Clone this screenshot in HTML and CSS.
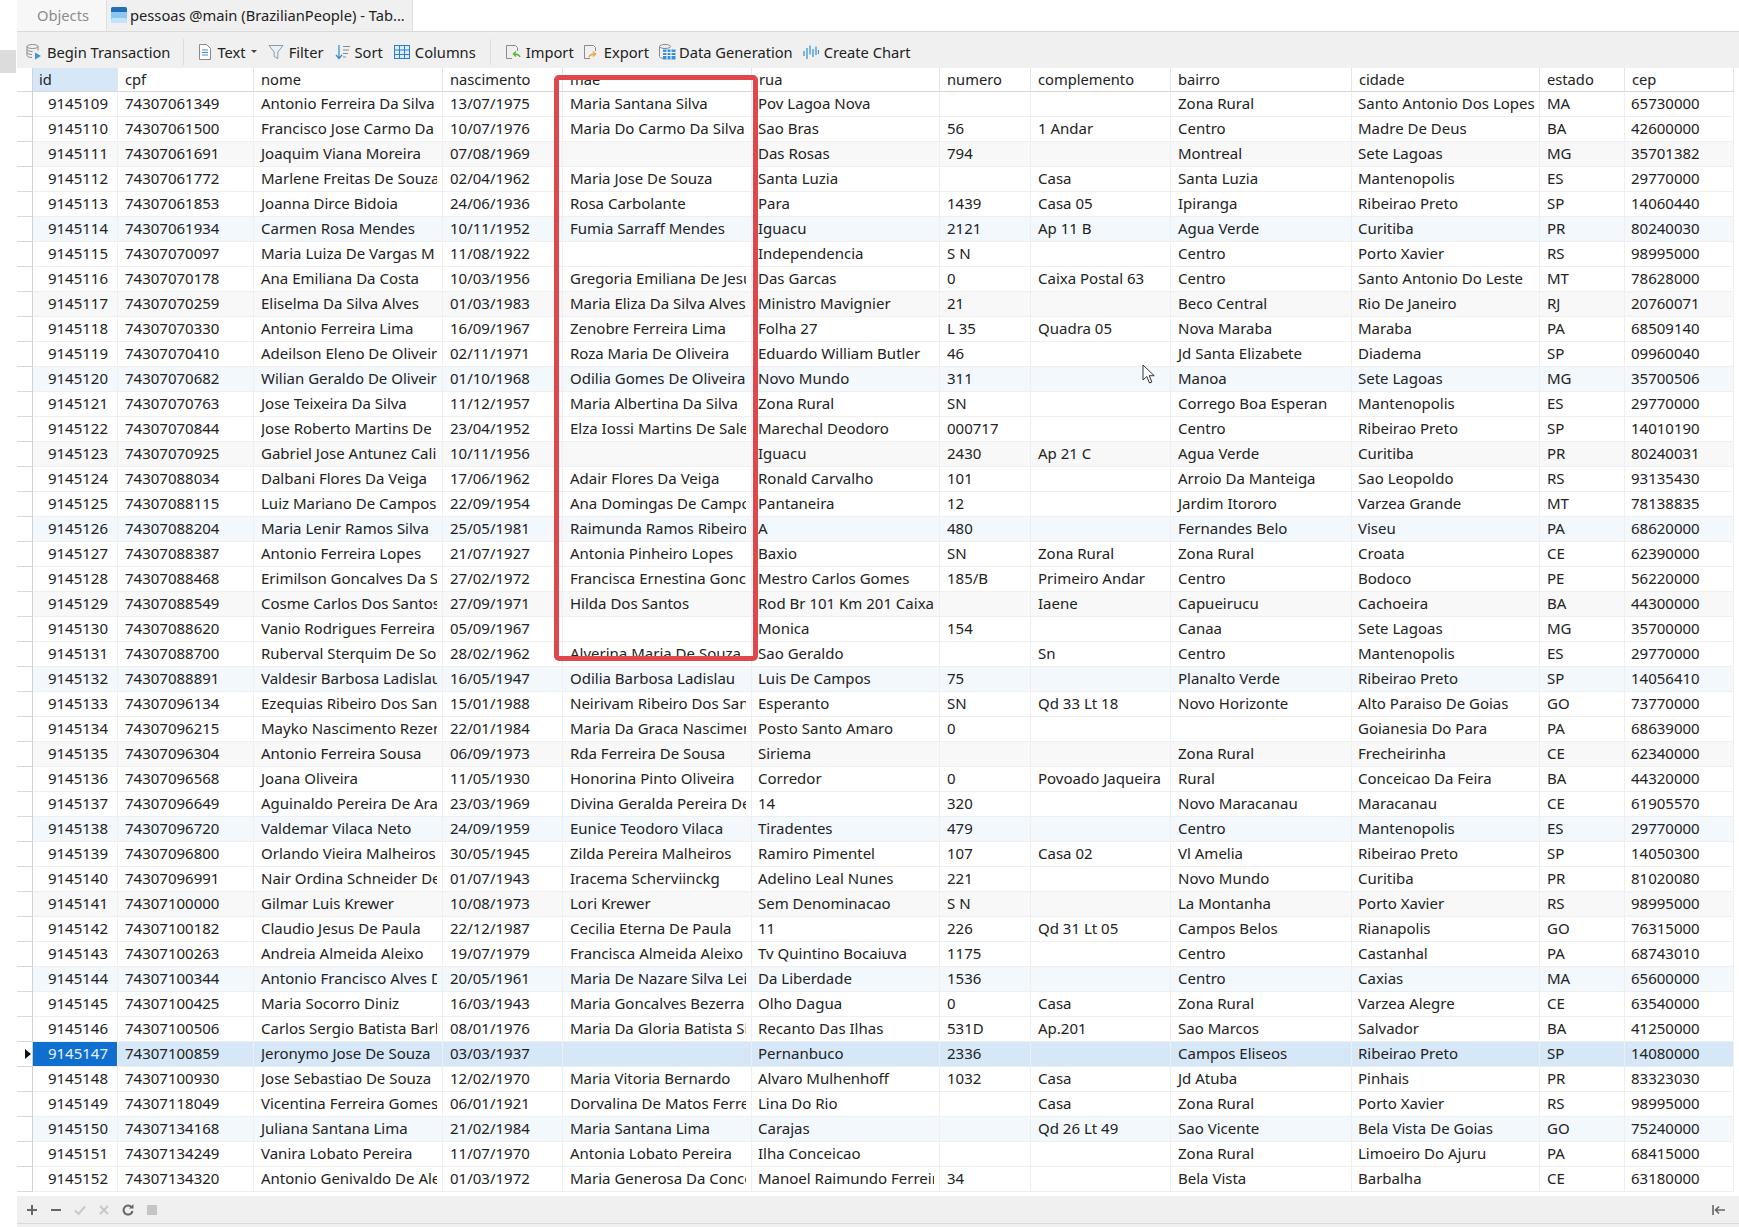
FILE: index.html
```html
<!DOCTYPE html>
<html lang="en">
<head>
    <meta charset="UTF-8">
    <title>pessoas @main (BrazilianPeople) - Table</title>
    <link rel="stylesheet" href="styles.css">
</head>
<body>
<div class="app">
    <div class="gutter"><div class="gutter-mark"></div></div>
    <div class="main">
        <div class="tabs">
            <div class="tab tab-objects">Objects</div>
            <div class="tab tab-active">
                <svg class="tab-icon" width="16" height="16" viewBox="0 0 16 16"><rect x="0" y="0" width="16" height="16" rx="2" fill="#8cc6f2"/><path d="M0 2a2 2 0 0 1 2-2h12a2 2 0 0 1 2 2v3H0z" fill="#1c6fb8"/><rect x="0" y="11" width="16" height="5" rx="2" fill="#c4e2f8"/></svg>
                <span>pessoas @main (BrazilianPeople) - Tab...</span>
            </div>
        </div>
        <div class="toolbar">
            <div class="tool tool-begin">
                <svg width="16" height="16" viewBox="0 0 16 16" fill="none" stroke="#8a8a8a"><ellipse cx="6.5" cy="2.5" rx="5.5" ry="2"/><path d="M1 2.5v9c0 1.1 2.5 2 5 2M12 2.5v4M1 5.5c0 1.1 2.5 2 5.5 2M1 8.5c0 1.1 2.5 2 5 2"/><path d="M9 8.5l6 3.500-6 3.500z" fill="#3d96d8" stroke="none"/></svg>
                <span>Begin Transaction</span>
            </div>
            <div class="sep"></div>
            <div class="tool">
                <svg width="14" height="16" viewBox="0 0 14 16" fill="none"><path d="M1.500.5h7l4 4v11h-11z" fill="#fff" stroke="#8a8a8a"/><path d="M4 6h6M4 8.500h6M4 11h6" stroke="#3f8fcf"/></svg>
                <span>Text</span>
                <svg width="6" height="3" viewBox="0 0 6 3"><path d="M0 0h6L3 3z" fill="#444"/></svg>
            </div>
            <div class="tool">
                <svg width="16" height="16" viewBox="0 0 16 16" fill="none" stroke="#7f9db5"><path d="M1 1.500h14L9.800 8v6.500l-3.600-2V8z"/></svg>
                <span>Filter</span>
            </div>
            <div class="tool">
                <svg width="15" height="16" viewBox="0 0 15 16" fill="none"><path d="M4 1v13M1 11l3 3.500L7 11" stroke="#2f8ad6" stroke-width="1.200"/><path d="M8 2.500h7M8 6h6M8 9.500h5M8 13h3" stroke="#8a8a8a"/></svg>
                <span>Sort</span>
            </div>
            <div class="tool tool-columns">
                <svg width="16" height="16" viewBox="0 0 16 16" fill="none" stroke="#2f7fc4"><rect x=".5" y="1.500" width="15" height="13" fill="#dcecf9"/><path d="M5.500 1.500v13M10.500 1.500v13M.5 6h15M.5 10.500h15"/></svg>
                <span>Columns</span>
            </div>
            <div class="sep"></div>
            <div class="tool tool-import">
                <svg width="16" height="16" viewBox="0 0 16 16" fill="none"><path d="M7 14.500H1.500v-13h9l2 2V7" stroke="#8a8a8a"/><path d="M15 13c-1-2.500-3-3-6-3M11 7.500L8.500 10l2.500 2.500" stroke="#5cb531" stroke-width="1.400"/></svg>
                <span>Import</span>
            </div>
            <div class="tool tool-export">
                <svg width="16" height="16" viewBox="0 0 16 16" fill="none"><path d="M7 14.500H1.500v-13h9l2 2V7" stroke="#8a8a8a"/><path d="M6 13c1-2.500 3-3 6-3M10 7.500l2.500 2.500-2.500 2.500" stroke="#eba63c" stroke-width="1.400"/></svg>
                <span>Export</span>
            </div>
            <div class="tool tool-data">
                <svg width="17" height="16" viewBox="0 0 17 16" fill="none"><ellipse cx="6" cy="2.500" rx="5.500" ry="2" stroke="#8a8a8a"/><path d="M.5 2.500v10c0 1 2 1.800 4 2" stroke="#8a8a8a"/><rect x="4" y="5.500" width="12.500" height="10" fill="#3a8fd6"/><path d="M4 8.500h12.500M4 11.500h12.500M8 5.500v10M12 5.500v10" stroke="#fff"/></svg>
                <span>Data Generation</span>
            </div>
            <div class="tool">
                <svg width="16" height="16" viewBox="0 0 16 16" fill="none" stroke="#3d96d8" stroke-width="1.300"><path d="M1 7v5M4 4v11M7 1.500v9M10 5v8M13 2.500V11M15.500 6v4"/></svg>
                <span>Create Chart</span>
            </div>
        </div>
        <div class="grid-wrap">
            <table class="grid">
                <colgroup>
                    <col class="c-head"><col class="c-id"><col class="c-cpf"><col class="c-nome"><col class="c-nasc"><col class="c-mae"><col class="c-rua"><col class="c-num"><col class="c-comp"><col class="c-bairro"><col class="c-cidade"><col class="c-estado"><col class="c-cep">
                </colgroup>
                <thead>
                    <tr><th class="rowhead"></th><th class="sorted">id</th><th>cpf</th><th>nome</th><th>nascimento</th><th>mae</th><th>rua</th><th>numero</th><th>complemento</th><th>bairro</th><th>cidade</th><th>estado</th><th>cep</th></tr>
                </thead>
                <tbody>
                    <tr><td class="rowhead"></td><td class="id">9145109</td><td>74307061349</td><td><span class="cut">Antonio Ferreira Da Silva</span></td><td>13/07/1975</td><td>Maria Santana Silva</td><td>Pov Lagoa Nova</td><td></td><td></td><td>Zona Rural</td><td>Santo Antonio Dos Lopes</td><td>MA</td><td>65730000</td></tr>
                    <tr><td class="rowhead"></td><td class="id">9145110</td><td>74307061500</td><td><span class="cut">Francisco Jose Carmo Da</span></td><td>10/07/1976</td><td><span class="cut">Maria Do Carmo Da Silva</span></td><td>Sao Bras</td><td>56</td><td>1 Andar</td><td>Centro</td><td>Madre De Deus</td><td>BA</td><td>42600000</td></tr>
                    <tr><td class="rowhead"></td><td class="id">9145111</td><td>74307061691</td><td>Joaquim Viana Moreira</td><td>07/08/1969</td><td></td><td>Das Rosas</td><td>794</td><td></td><td>Montreal</td><td>Sete Lagoas</td><td>MG</td><td>35701382</td></tr>
                    <tr><td class="rowhead"></td><td class="id">9145112</td><td>74307061772</td><td><span class="cut">Marlene Freitas De Souza</span></td><td>02/04/1962</td><td>Maria Jose De Souza</td><td>Santa Luzia</td><td></td><td>Casa</td><td>Santa Luzia</td><td>Mantenopolis</td><td>ES</td><td>29770000</td></tr>
                    <tr><td class="rowhead"></td><td class="id">9145113</td><td>74307061853</td><td>Joanna Dirce Bidoia</td><td>24/06/1936</td><td>Rosa Carbolante</td><td>Para</td><td>1439</td><td>Casa 05</td><td>Ipiranga</td><td>Ribeirao Preto</td><td>SP</td><td>14060440</td></tr>
                    <tr><td class="rowhead"></td><td class="id">9145114</td><td>74307061934</td><td>Carmen Rosa Mendes</td><td>10/11/1952</td><td>Fumia Sarraff Mendes</td><td>Iguacu</td><td>2121</td><td>Ap 11 B</td><td>Agua Verde</td><td>Curitiba</td><td>PR</td><td>80240030</td></tr>
                    <tr><td class="rowhead"></td><td class="id">9145115</td><td>74307070097</td><td>Maria Luiza De Vargas M</td><td>11/08/1922</td><td></td><td>Independencia</td><td>S N</td><td></td><td>Centro</td><td>Porto Xavier</td><td>RS</td><td>98995000</td></tr>
                    <tr><td class="rowhead"></td><td class="id">9145116</td><td>74307070178</td><td>Ana Emiliana Da Costa</td><td>10/03/1956</td><td><span class="cut">Gregoria Emiliana De Jesus</span></td><td>Das Garcas</td><td>0</td><td>Caixa Postal 63</td><td>Centro</td><td>Santo Antonio Do Leste</td><td>MT</td><td>78628000</td></tr>
                    <tr><td class="rowhead"></td><td class="id">9145117</td><td>74307070259</td><td>Eliselma Da Silva Alves</td><td>01/03/1983</td><td><span class="cut">Maria Eliza Da Silva Alves</span></td><td>Ministro Mavignier</td><td>21</td><td></td><td>Beco Central</td><td>Rio De Janeiro</td><td>RJ</td><td>20760071</td></tr>
                    <tr><td class="rowhead"></td><td class="id">9145118</td><td>74307070330</td><td>Antonio Ferreira Lima</td><td>16/09/1967</td><td>Zenobre Ferreira Lima</td><td>Folha 27</td><td>L 35</td><td>Quadra 05</td><td>Nova Maraba</td><td>Maraba</td><td>PA</td><td>68509140</td></tr>
                    <tr><td class="rowhead"></td><td class="id">9145119</td><td>74307070410</td><td><span class="cut">Adeilson Eleno De Oliveira</span></td><td>02/11/1971</td><td>Roza Maria De Oliveira</td><td><span class="cut">Eduardo William Butler</span></td><td>46</td><td></td><td>Jd Santa Elizabete</td><td>Diadema</td><td>SP</td><td>09960040</td></tr>
                    <tr><td class="rowhead"></td><td class="id">9145120</td><td>74307070682</td><td><span class="cut">Wilian Geraldo De Oliveira</span></td><td>01/10/1968</td><td><span class="cut">Odilia Gomes De Oliveira</span></td><td>Novo Mundo</td><td>311</td><td></td><td>Manoa</td><td>Sete Lagoas</td><td>MG</td><td>35700506</td></tr>
                    <tr><td class="rowhead"></td><td class="id">9145121</td><td>74307070763</td><td>Jose Teixeira Da Silva</td><td>11/12/1957</td><td><span class="cut">Maria Albertina Da Silva</span></td><td>Zona Rural</td><td>SN</td><td></td><td>Corrego Boa Esperan</td><td>Mantenopolis</td><td>ES</td><td>29770000</td></tr>
                    <tr><td class="rowhead"></td><td class="id">9145122</td><td>74307070844</td><td><span class="cut">Jose Roberto Martins De</span></td><td>23/04/1952</td><td><span class="cut">Elza Iossi Martins De Sale</span></td><td>Marechal Deodoro</td><td>000717</td><td></td><td>Centro</td><td>Ribeirao Preto</td><td>SP</td><td>14010190</td></tr>
                    <tr><td class="rowhead"></td><td class="id">9145123</td><td>74307070925</td><td><span class="cut">Gabriel Jose Antunez Cali</span></td><td>10/11/1956</td><td></td><td>Iguacu</td><td>2430</td><td>Ap 21 C</td><td>Agua Verde</td><td>Curitiba</td><td>PR</td><td>80240031</td></tr>
                    <tr><td class="rowhead"></td><td class="id">9145124</td><td>74307088034</td><td>Dalbani Flores Da Veiga</td><td>17/06/1962</td><td>Adair Flores Da Veiga</td><td>Ronald Carvalho</td><td>101</td><td></td><td>Arroio Da Manteiga</td><td>Sao Leopoldo</td><td>RS</td><td>93135430</td></tr>
                    <tr><td class="rowhead"></td><td class="id">9145125</td><td>74307088115</td><td><span class="cut">Luiz Mariano De Campos</span></td><td>22/09/1954</td><td><span class="cut">Ana Domingas De Campos</span></td><td>Pantaneira</td><td>12</td><td></td><td>Jardim Itororo</td><td>Varzea Grande</td><td>MT</td><td>78138835</td></tr>
                    <tr><td class="rowhead"></td><td class="id">9145126</td><td>74307088204</td><td><span class="cut">Maria Lenir Ramos Silva</span></td><td>25/05/1981</td><td><span class="cut">Raimunda Ramos Ribeiro</span></td><td>A</td><td>480</td><td></td><td>Fernandes Belo</td><td>Viseu</td><td>PA</td><td>68620000</td></tr>
                    <tr><td class="rowhead"></td><td class="id">9145127</td><td>74307088387</td><td>Antonio Ferreira Lopes</td><td>21/07/1927</td><td>Antonia Pinheiro Lopes</td><td>Baxio</td><td>SN</td><td>Zona Rural</td><td>Zona Rural</td><td>Croata</td><td>CE</td><td>62390000</td></tr>
                    <tr><td class="rowhead"></td><td class="id">9145128</td><td>74307088468</td><td><span class="cut">Erimilson Goncalves Da Silva</span></td><td>27/02/1972</td><td><span class="cut">Francisca Ernestina Goncalves</span></td><td>Mestro Carlos Gomes</td><td>185/B</td><td>Primeiro Andar</td><td>Centro</td><td>Bodoco</td><td>PE</td><td>56220000</td></tr>
                    <tr><td class="rowhead"></td><td class="id">9145129</td><td>74307088549</td><td><span class="cut">Cosme Carlos Dos Santos</span></td><td>27/09/1971</td><td>Hilda Dos Santos</td><td><span class="cut">Rod Br 101 Km 201 Caixa Postal</span></td><td></td><td>Iaene</td><td>Capueirucu</td><td>Cachoeira</td><td>BA</td><td>44300000</td></tr>
                    <tr><td class="rowhead"></td><td class="id">9145130</td><td>74307088620</td><td><span class="cut">Vanio Rodrigues Ferreira</span></td><td>05/09/1967</td><td></td><td>Monica</td><td>154</td><td></td><td>Canaa</td><td>Sete Lagoas</td><td>MG</td><td>35700000</td></tr>
                    <tr><td class="rowhead"></td><td class="id">9145131</td><td>74307088700</td><td><span class="cut">Ruberval Sterquim De Souza</span></td><td>28/02/1962</td><td><span class="cut">Alverina Maria De Souza</span></td><td>Sao Geraldo</td><td></td><td>Sn</td><td>Centro</td><td>Mantenopolis</td><td>ES</td><td>29770000</td></tr>
                    <tr><td class="rowhead"></td><td class="id">9145132</td><td>74307088891</td><td><span class="cut">Valdesir Barbosa Ladislau</span></td><td>16/05/1947</td><td>Odilia Barbosa Ladislau</td><td>Luis De Campos</td><td>75</td><td></td><td>Planalto Verde</td><td>Ribeirao Preto</td><td>SP</td><td>14056410</td></tr>
                    <tr><td class="rowhead"></td><td class="id">9145133</td><td>74307096134</td><td><span class="cut">Ezequias Ribeiro Dos Santos</span></td><td>15/01/1988</td><td><span class="cut">Neirivam Ribeiro Dos Santos</span></td><td>Esperanto</td><td>SN</td><td>Qd 33 Lt 18</td><td>Novo Horizonte</td><td>Alto Paraiso De Goias</td><td>GO</td><td>73770000</td></tr>
                    <tr><td class="rowhead"></td><td class="id">9145134</td><td>74307096215</td><td><span class="cut">Mayko Nascimento Rezende</span></td><td>22/01/1984</td><td><span class="cut">Maria Da Graca Nascimento</span></td><td>Posto Santo Amaro</td><td>0</td><td></td><td></td><td>Goianesia Do Para</td><td>PA</td><td>68639000</td></tr>
                    <tr><td class="rowhead"></td><td class="id">9145135</td><td>74307096304</td><td>Antonio Ferreira Sousa</td><td>06/09/1973</td><td>Rda Ferreira De Sousa</td><td>Siriema</td><td></td><td></td><td>Zona Rural</td><td>Frecheirinha</td><td>CE</td><td>62340000</td></tr>
                    <tr><td class="rowhead"></td><td class="id">9145136</td><td>74307096568</td><td>Joana Oliveira</td><td>11/05/1930</td><td>Honorina Pinto Oliveira</td><td>Corredor</td><td>0</td><td><span class="cut">Povoado Jaqueira</span></td><td>Rural</td><td>Conceicao Da Feira</td><td>BA</td><td>44320000</td></tr>
                    <tr><td class="rowhead"></td><td class="id">9145137</td><td>74307096649</td><td><span class="cut">Aguinaldo Pereira De Araujo</span></td><td>23/03/1969</td><td><span class="cut">Divina Geralda Pereira De Araujo</span></td><td>14</td><td>320</td><td></td><td>Novo Maracanau</td><td>Maracanau</td><td>CE</td><td>61905570</td></tr>
                    <tr><td class="rowhead"></td><td class="id">9145138</td><td>74307096720</td><td>Valdemar Vilaca Neto</td><td>24/09/1959</td><td>Eunice Teodoro Vilaca</td><td>Tiradentes</td><td>479</td><td></td><td>Centro</td><td>Mantenopolis</td><td>ES</td><td>29770000</td></tr>
                    <tr><td class="rowhead"></td><td class="id">9145139</td><td>74307096800</td><td><span class="cut">Orlando Vieira Malheiros</span></td><td>30/05/1945</td><td>Zilda Pereira Malheiros</td><td>Ramiro Pimentel</td><td>107</td><td>Casa 02</td><td>Vl Amelia</td><td>Ribeirao Preto</td><td>SP</td><td>14050300</td></tr>
                    <tr><td class="rowhead"></td><td class="id">9145140</td><td>74307096991</td><td><span class="cut">Nair Ordina Schneider De Souza</span></td><td>01/07/1943</td><td>Iracema Scherviinckg</td><td>Adelino Leal Nunes</td><td>221</td><td></td><td>Novo Mundo</td><td>Curitiba</td><td>PR</td><td>81020080</td></tr>
                    <tr><td class="rowhead"></td><td class="id">9145141</td><td>74307100000</td><td>Gilmar Luis Krewer</td><td>10/08/1973</td><td>Lori Krewer</td><td>Sem Denominacao</td><td>S N</td><td></td><td>La Montanha</td><td>Porto Xavier</td><td>RS</td><td>98995000</td></tr>
                    <tr><td class="rowhead"></td><td class="id">9145142</td><td>74307100182</td><td>Claudio Jesus De Paula</td><td>22/12/1987</td><td>Cecilia Eterna De Paula</td><td>11</td><td>226</td><td>Qd 31 Lt 05</td><td>Campos Belos</td><td>Rianapolis</td><td>GO</td><td>76315000</td></tr>
                    <tr><td class="rowhead"></td><td class="id">9145143</td><td>74307100263</td><td>Andreia Almeida Aleixo</td><td>19/07/1979</td><td><span class="cut">Francisca Almeida Aleixo</span></td><td>Tv Quintino Bocaiuva</td><td>1175</td><td></td><td>Centro</td><td>Castanhal</td><td>PA</td><td>68743010</td></tr>
                    <tr><td class="rowhead"></td><td class="id">9145144</td><td>74307100344</td><td><span class="cut">Antonio Francisco Alves Dias</span></td><td>20/05/1961</td><td><span class="cut">Maria De Nazare Silva Leite</span></td><td>Da Liberdade</td><td>1536</td><td></td><td>Centro</td><td>Caxias</td><td>MA</td><td>65600000</td></tr>
                    <tr><td class="rowhead"></td><td class="id">9145145</td><td>74307100425</td><td>Maria Socorro Diniz</td><td>16/03/1943</td><td>Maria Goncalves Bezerra</td><td>Olho Dagua</td><td>0</td><td>Casa</td><td>Zona Rural</td><td>Varzea Alegre</td><td>CE</td><td>63540000</td></tr>
                    <tr><td class="rowhead"></td><td class="id">9145146</td><td>74307100506</td><td><span class="cut">Carlos Sergio Batista Barbosa</span></td><td>08/01/1976</td><td><span class="cut">Maria Da Gloria Batista Silva</span></td><td>Recanto Das Ilhas</td><td>531D</td><td>Ap.201</td><td>Sao Marcos</td><td>Salvador</td><td>BA</td><td>41250000</td></tr>
                    <tr class="selected"><td class="rowhead"><span class="pointer"></span></td><td class="id">9145147</td><td>74307100859</td><td><span class="cut">Jeronymo Jose De Souza</span></td><td>03/03/1937</td><td></td><td>Pernanbuco</td><td>2336</td><td></td><td>Campos Eliseos</td><td>Ribeirao Preto</td><td>SP</td><td>14080000</td></tr>
                    <tr><td class="rowhead"></td><td class="id">9145148</td><td>74307100930</td><td><span class="cut">Jose Sebastiao De Souza</span></td><td>12/02/1970</td><td>Maria Vitoria Bernardo</td><td>Alvaro Mulhenhoff</td><td>1032</td><td>Casa</td><td>Jd Atuba</td><td>Pinhais</td><td>PR</td><td>83323030</td></tr>
                    <tr><td class="rowhead"></td><td class="id">9145149</td><td>74307118049</td><td><span class="cut">Vicentina Ferreira Gomes</span></td><td>06/01/1921</td><td><span class="cut">Dorvalina De Matos Ferreira</span></td><td>Lina Do Rio</td><td></td><td>Casa</td><td>Zona Rural</td><td>Porto Xavier</td><td>RS</td><td>98995000</td></tr>
                    <tr><td class="rowhead"></td><td class="id">9145150</td><td>74307134168</td><td>Juliana Santana Lima</td><td>21/02/1984</td><td>Maria Santana Lima</td><td>Carajas</td><td></td><td>Qd 26 Lt 49</td><td>Sao Vicente</td><td>Bela Vista De Goias</td><td>GO</td><td>75240000</td></tr>
                    <tr><td class="rowhead"></td><td class="id">9145151</td><td>74307134249</td><td>Vanira Lobato Pereira</td><td>11/07/1970</td><td>Antonia Lobato Pereira</td><td>Ilha Conceicao</td><td></td><td></td><td>Zona Rural</td><td>Limoeiro Do Ajuru</td><td>PA</td><td>68415000</td></tr>
                    <tr><td class="rowhead"></td><td class="id">9145152</td><td>74307134320</td><td><span class="cut">Antonio Genivaldo De Alencar</span></td><td>01/03/1972</td><td><span class="cut">Maria Generosa Da Conceicao</span></td><td><span class="cut">Manoel Raimundo Ferreira</span></td><td>34</td><td></td><td>Bela Vista</td><td>Barbalha</td><td>CE</td><td>63180000</td></tr>
                </tbody>
            </table>
        </div>
        <div class="bottombar">
            <div class="bottom-tools">
                <svg width="12" height="12" viewBox="0 0 12 12"><path d="M6 1v10M1 6h10" stroke="#666" stroke-width="2"/></svg>
                <svg width="12" height="12" viewBox="0 0 12 12"><path d="M1 6h10" stroke="#666" stroke-width="2"/></svg>
                <svg width="12" height="12" viewBox="0 0 12 12" fill="none"><path d="M1 6.500l3.500 3.500L11 2.500" stroke="#c8c8c8" stroke-width="2"/></svg>
                <svg width="12" height="12" viewBox="0 0 12 12" fill="none"><path d="M2 2l8 8M10 2l-8 8" stroke="#c8c8c8" stroke-width="2"/></svg>
                <svg width="12" height="12" viewBox="0 0 12 12" fill="none"><path d="M9.800 3.500A4.500 4.500 0 1 0 10.500 7" stroke="#666" stroke-width="2"/><path d="M7 4.500h4.500V0z" fill="#666"/></svg>
                <svg width="12" height="12" viewBox="0 0 12 12"><rect x="1" y="1" width="10" height="10" fill="#c4c4c4"/></svg>
            </div>
            <svg class="collapse" width="13" height="10" viewBox="0 0 13 10"><path d="M1 0v10M13 5H4M7 1.500L3.500 5 7 8.500" fill="none" stroke="#666" stroke-width="1.600"/></svg>
        </div>
        <div class="statusbar"></div>
    </div>
</div>
<div class="red-box"></div>
<svg class="cursor" width="13" height="20" viewBox="0 0 13 20"><path d="M1 1v15l3.800-3.500 2.700 6.500 2.400-1-2.700-6.300h5z" fill="#fff" stroke="#333"/></svg>
</body>
</html>
```

FILE: styles.css
```css
html, body {
    margin: 0;
    height: 1227px;
    overflow: hidden;
    background-color: #fff;
}

body {
    position: relative;
    font-family: "Noto Sans", sans-serif;
    font-size: 15px;
    color: #222;
}

.app {
    display: flex;
    height: 1227px;
}

.gutter {
    width: 17px;
    flex-shrink: 0;
    padding-top: 50px;
    box-sizing: border-box;
}

.gutter-mark {
    width: 16px;
    height: 23px;
    background-color: #dcdcdc;
}

.main {
    flex: 1;
    display: flex;
    flex-direction: column;
    min-width: 0;
}

/* tabs */
.tabs {
    display: flex;
    height: 32px;
    box-sizing: border-box;
    border-bottom: 1px solid #d9d9d9;
    font-size: 14.7px;
}

.tab {
    display: flex;
    align-items: center;
    height: 31px;
    box-sizing: border-box;
    padding-bottom: 2px;
    border-right: 1px solid #dedede;
}

.tab-objects {
    width: 90px;
    padding-left: 20px;
    color: #8c8c8c;
    background-color: #f7f7f7;
}

.tab-active {
    width: 306px;
    padding-left: 4px;
    gap: 3px;
    background-color: #f0f0f0;
}

.tab-icon {
    flex-shrink: 0;
}

/* toolbar */
.toolbar {
    display: flex;
    align-items: center;
    height: 36px;
    box-sizing: border-box;
    padding: 3px 0 0 9px;
    background-color: #f0f0f0;
    font-size: 14.7px;
}

.tool {
    display: flex;
    align-items: center;
    gap: 5px;
    margin-right: 11px;
}

.tool-begin {
    margin-right: 13px;
}

.tool-columns {
    margin-right: 14px;
}

.tool-import {
    margin-right: 9px;
}

.tool-export {
    margin-right: 10px;
}

.tool-data {
    gap: 3px;
    margin-right: 10px;
}

.sep {
    width: 1px;
    height: 26px;
    margin-right: 14px;
    background-color: #dcdcdc;
}

/* grid */
.grid-wrap {
    height: 1128px;
    background-color: #fff;
}

.grid {
    table-layout: fixed;
    width: 1717px;
    border-collapse: separate;
    border-spacing: 0;
}

.c-head { width: 16px; }
.c-id { width: 85px; }
.c-cpf { width: 136px; }
.c-nome { width: 189px; }
.c-nasc { width: 120px; }
.c-mae { width: 189px; }
.c-rua { width: 188px; }
.c-num { width: 91px; }
.c-comp { width: 140px; }
.c-bairro { width: 181px; }
.c-cidade { width: 188px; }
.c-estado { width: 85px; }
.c-cep { width: 109px; }

.grid th,
.grid td {
    box-sizing: border-box;
    height: 25px;
    padding: 0 0 2px 7px;
    overflow: hidden;
    white-space: nowrap;
    font-weight: normal;
    text-align: left;
    line-height: 22px;
    border-right: 1px solid #efefef;
    border-bottom: 1px solid #efefef;
}

.grid th {
    height: 24px;
    padding-bottom: 0;
    font-size: 14.7px;
    line-height: 23px;
    border-right-color: #e4e4e4;
    border-bottom-color: #d8d8d8;
}

.grid th.sorted {
    padding-left: 6px;
    background-color: #d6e8f8;
}

.grid td:nth-child(7),
.grid td:nth-child(11),
.grid td:nth-child(13) {
    padding-left: 6px;
}

.grid td.id {
    padding: 0 9px 2px 0;
    text-align: right;
}

.grid .rowhead {
    position: relative;
    padding: 0;
    border-right-color: #c9d3dc;
    border-bottom-color: #d8d8d8;
}

.cut {
    display: block;
    overflow: hidden;
    margin-right: 5px;
}

.grid tbody tr:nth-child(6n+3) td {
    background-color: #f8f8f8;
}

.grid tbody tr:nth-child(6n) td {
    background-color: #f3f8fd;
}

.grid tbody tr td.rowhead {
    background-color: #fff;
}

.grid tbody tr.selected td {
    background-color: #d6e8f8;
}

.grid tbody tr.selected td.rowhead {
    background-color: #fff;
}

.grid tbody tr.selected td.id {
    color: #e6f1fb;
    background-color: #0f6fcf;
}

.pointer {
    position: absolute;
    left: 8px;
    top: 7px;
    border-left: 6px solid #111;
    border-top: 5px solid transparent;
    border-bottom: 5px solid transparent;
}

/* bottom bar */
.bottombar {
    display: flex;
    align-items: center;
    justify-content: space-between;
    height: 27px;
    padding: 0 14px 0 9px;
    background-color: #f0f0f0;
    border-bottom: 1px solid #d9d9d9;
}

.bottom-tools {
    display: flex;
    gap: 12px;
}

.statusbar {
    flex: 1;
    background-color: #f0f0f0;
}

/* overlays */
.red-box {
    position: absolute;
    left: 554px;
    top: 75px;
    width: 204px;
    height: 586px;
    box-sizing: border-box;
    border: 5px solid #e0474c;
    border-radius: 5px;
}

.cursor {
    position: absolute;
    left: 1142px;
    top: 364px;
}
```
